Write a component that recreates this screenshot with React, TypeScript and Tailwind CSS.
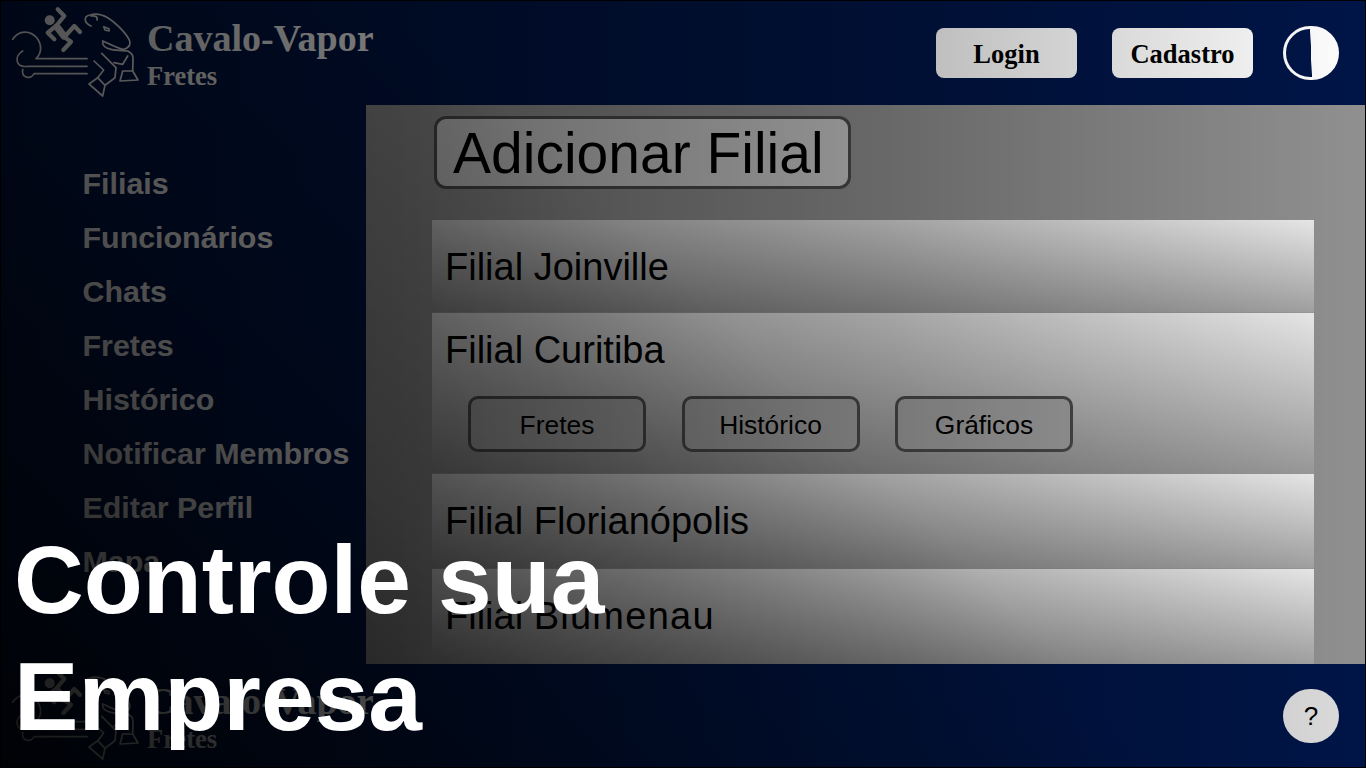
const navItems = ['Filiais', 'Funcionários', 'Chats', 'Fretes', 'Histórico', 'Notificar Membros', 'Editar Perfil', 'Mapa']

const branchActions = ['Fretes', 'Histórico', 'Gráficos']

function Logo() {
  return (
    <svg width="140" height="100" viewBox="0 0 140 100" fill="none" stroke="#ffffff" strokeWidth="1.7" strokeLinecap="round" strokeLinejoin="round" className="shrink-0">
      {/* wind */}
      <path d="M11.700 38.300C18 29 29 29 36 37C41 44 41 52 35 57.700H86" />
      <path d="M21.700 50C13 55 14 67 26.700 65.300H86" />
      <path d="M21.700 68.300C20 77 30 79 33 72.700H86" />
      {/* runner */}
      <circle cx="48.700" cy="19.300" r="5" fill="#ffffff" stroke="none" />
      <path strokeWidth="4.200" d="M56.700 8.300L63.300 15L55 25L46.700 31.700L53.300 38.300M64.300 35L73.300 25L79 31M64.300 36.700L70 40.700L62.300 49" />
      <path strokeWidth="7" d="M56 26L63 35" />
      {/* horse */}
      <path d="M90 25C82 21 83 15 89 14C95 12 101 13.500 106.700 16.700C114 21 124 31 128 38.300C130 42 129.500 46 123 48.300C119 48.500 113 45 101.700 40C101 44 104 47 110 48.300C116 49.500 122 49.500 126.700 50C131 52 132.500 54 132 58L131.700 70" />
      <path d="M90 15C94 14.500 97 15.500 96 19" />
      <path d="M102.700 25.700L108 27.700V30L104 29Z" />
      <path d="M121.700 70H131.700L137 79L119 80Z" />
      <path d="M126.700 55L121.700 63.300L113 61.700" />
      <path d="M100.700 52.300L115 66.700L114 76.700L104 84.300L96.700 76.700L88 83L101.700 95L104 84.300" />
      <path d="M93 60L102.700 69L96.700 76.700" />
    </svg>
  )
}

function Brand() {
  return (
    <div className="flex items-start gap-[6px] font-['Liberation_Serif',serif] font-bold text-white">
      <Logo />
      <div className="pt-[14px]">
        <p className="text-[38px] leading-[46px]">Cavalo-Vapor</p>
        <p className="text-[26.500px] leading-[30px]">Fretes</p>
      </div>
    </div>
  )
}

export default function App() {
  return (
    <div className="relative h-[768px] w-[1366px] overflow-hidden border border-black bg-[#001547] font-['Liberation_Sans',sans-serif] text-black">
      <header className="flex h-[104px] items-start justify-between">
        <Brand />
        <div className="flex items-center pr-[26px] pt-[25px] font-['Liberation_Serif',serif] text-[26.500px] font-bold">
          <button className="h-[50px] w-[141px] rounded-lg bg-white pt-[3px]">Login</button>
          <button className="ml-[35px] h-[50px] w-[141px] rounded-lg bg-white pt-[3px]">Cadastro</button>
          <div className="ml-[30px] h-[54px] w-[56px] rounded-full border-[3px] border-white bg-[linear-gradient(88deg,transparent_49.500%,#ffffff_50.500%)]" />
        </div>
      </header>

      <div className="flex h-[559px]">
        <aside className="flex w-[365px] shrink-0 flex-col pl-[81.500px] pt-[51px] text-[30.400px] font-bold leading-[54px] text-white">
          {navItems.map(item => (
            <a key={item}>{item}</a>
          ))}
        </aside>

        <main className="flex-1 overflow-hidden bg-[#909090] pl-[66px] pr-[50px] pt-[11px]">
          <button className="ml-[2px] block h-[73px] w-[417px] rounded-xl border-[3px] border-[#4c4c4c] bg-[#cccccc] pl-[16px] text-left text-[57px] leading-[68px]">
            Adicionar Filial
          </button>

          <div className="mt-[31px] w-[882px]">
            <section className="h-[93px] border-b border-[#9a9a9a] bg-[linear-gradient(182deg,#ececec,#8c8c8c)] pl-[13px] pt-[27px] text-[38px] leading-[41px]">
              Filial Joinville
            </section>
            <section className="h-[161px] border-b border-[#9a9a9a] bg-[linear-gradient(182deg,#ececec,#8c8c8c)] pl-[13px] pt-[17px] text-[38px] leading-[41px]">
              Filial Curitiba
              <div className="mt-[25px] flex gap-[35.500px] pl-[23px]">
                {branchActions.map(action => (
                  <button key={action} className="h-[56px] w-[178px] rounded-[10px] border-[3px] border-[#4c4c4c] bg-[#a6a6a6] pt-[2px] text-[26.400px] leading-[30px]">
                    {action}
                  </button>
                ))}
              </div>
            </section>
            <section className="h-[95px] border-b border-[#9a9a9a] bg-[linear-gradient(182deg,#ececec,#8c8c8c)] pl-[13px] pt-[27px] text-[38px] leading-[41px]">
              Filial Florianópolis
            </section>
            <section className="h-[95px] bg-[linear-gradient(182deg,#ececec,#8c8c8c)] pl-[13px] pt-[27px] text-[38px] leading-[41px]">
              Filial <span className="tracking-[1.250px]">Blumenau</span>
            </section>
          </div>
        </main>
      </div>

      <footer className="flex h-[103px] items-start justify-between">
        <Brand />
        <button className="mr-[26px] mt-[25px] h-[54px] w-[56px] rounded-full bg-[#dcdcdc] text-[26px]">?</button>
      </footer>

      {/* fade over the whole page, the hero text sits on top of it */}
      <div className="pointer-events-none absolute inset-0 bg-[linear-gradient(45deg,rgba(0,0,0,0.8),rgba(0,0,0,0.28)_30%,transparent_55%),linear-gradient(to_right,rgba(0,0,0,0.6),rgba(0,0,0,0.5)_30%,rgba(0,0,0,0.27)_66%,transparent)]" />

      <h1 className="absolute left-[13px] top-[520px] w-[640px] text-[96.600px] font-bold leading-[117px] text-white">
        Controle sua Empresa
      </h1>
    </div>
  )
}
